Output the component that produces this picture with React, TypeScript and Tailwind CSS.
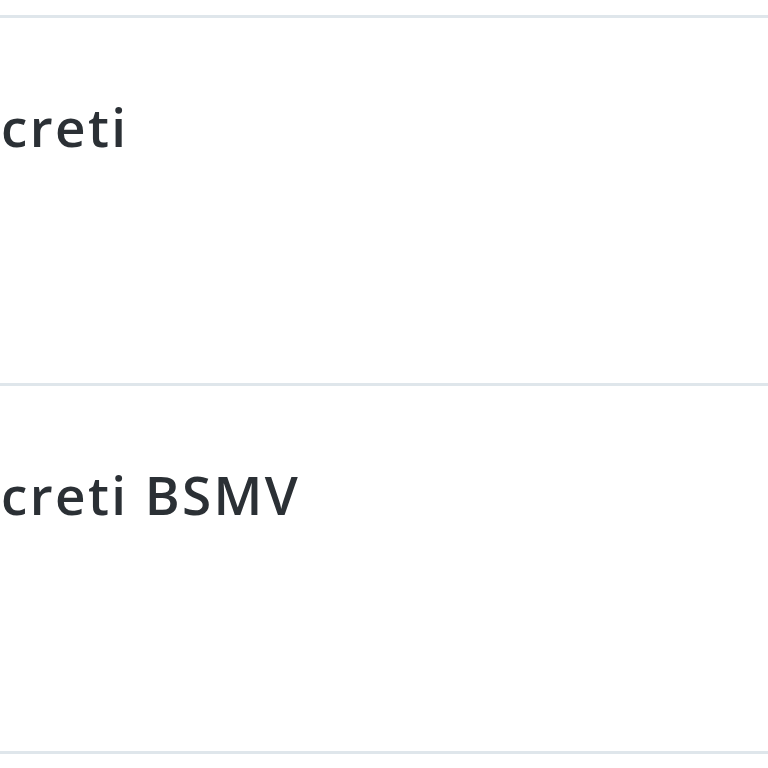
import React from "react";

export default function App() {
  const rows = ["creti", "creti BSMV"];
  return (
    <div className="w-[768px] h-[768px] overflow-hidden bg-white" style={{ fontFamily: '"Open Sans", "Noto Sans", sans-serif' }}>
      <div className="h-[18px] border-b-[3px] border-[#dfe6eb]" />
      {rows.map((r) => (
        <div key={r} className="h-[368px] border-b-[3px] border-[#dfe6eb] pt-[82px] pl-[1px]">
          <div className="text-[53px] leading-none font-semibold text-[#2b3035] tracking-[2.4px] whitespace-nowrap">{r}</div>
        </div>
      ))}
    </div>
  );
}
